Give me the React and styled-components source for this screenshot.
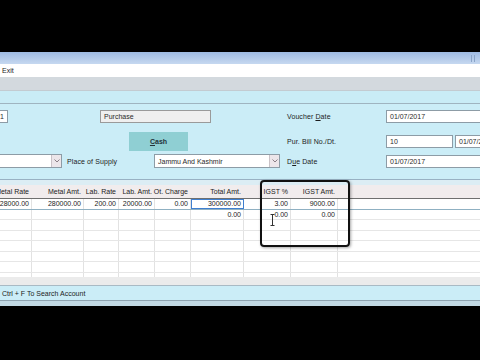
import React from "react";
import styled, { createGlobalStyle } from "styled-components";

const GlobalStyle = createGlobalStyle`
  html, body { margin: 0; padding: 0; background: #000; }
  * { box-sizing: border-box; }
  body { font-family: "Liberation Sans", Arial, sans-serif; }
`;

const Screen = styled.div`
  position: relative;
  width: 480px;
  height: 360px;
  background: #000;
  display: flex;
  flex-direction: column;
  overflow: hidden;
  font-size: 7px;
  color: #1c1c1c;
`;

const Black = styled.div`
  height: ${p => p.h}px;
  flex: none;
  background: #000;
`;

const TitleBar = styled.div`
  height: 12px;
  flex: none;
  background: linear-gradient(#9ebae2, #c6d8f0);
  display: flex;
  justify-content: flex-end;
  align-items: center;
  gap: 2px;
  padding-right: 5px;
`;

const Grip = styled.span`
  width: 1px;
  height: 7px;
  background: #8aa4c8;
`;

const MenuBar = styled.div`
  height: 13px;
  flex: none;
  background: #fff;
  display: flex;
  align-items: center;
  padding-left: 2px;
`;

const ToolBar = styled.div`
  height: 14px;
  flex: none;
  background: #d3d9de;
  border-bottom: 1px solid #c3cbd1;
`;

const Band = styled.div`
  height: 13px;
  flex: none;
  background: #c9ecf6;
  border-bottom: 1px solid #9fb4c0;
`;

const Form = styled.div`
  height: 75px;
  flex: none;
  background: #cbedf7;
  padding-top: 6px;
  overflow: hidden;
`;

const FormInner = styled.div`
  margin-left: -40px;
  display: flex;
  flex-direction: column;
`;

const FormRow = styled.div`
  display: flex;
  align-items: center;
  height: ${p => p.h}px;
  margin-top: ${p => p.mt || 0}px;
`;

const Field = styled.div`
  flex: none;
  width: ${p => p.w}px;
  height: ${p => p.h || 13}px;
  margin-left: ${p => p.ml || 0}px;
  background: ${p => (p.grey ? "#efefef" : "#fff")};
  border: 1px solid ${p => (p.grey ? "#9a9a9a" : "#8d9ca6")};
  display: flex;
  align-items: center;
  justify-content: ${p => (p.right ? "flex-end" : "flex-start")};
  padding: 0 3px;
  color: #2a2a2a;
  white-space: nowrap;
  overflow: hidden;
`;

const Select = styled.div`
  flex: none;
  width: ${p => p.w}px;
  height: 14px;
  margin-left: ${p => p.ml || 0}px;
  background: #fff;
  border: 1px solid #8d9ca6;
  display: flex;
  align-items: center;
  padding-left: 3px;
  color: #2a2a2a;
`;

const SelectText = styled.span`
  flex: 1;
  white-space: nowrap;
`;

const Arrow = styled.div`
  width: 10px;
  height: 12px;
  background: #ece6ea;
  border-left: 1px solid #c9c2c7;
  display: flex;
  align-items: center;
  justify-content: center;
`;

const Label = styled.div`
  flex: none;
  width: ${p => p.w}px;
  margin-left: ${p => p.ml || 0}px;
  white-space: nowrap;
  letter-spacing: 0.1px;
`;

const CashButton = styled.div`
  flex: none;
  width: 59px;
  height: 19px;
  margin-left: ${p => p.ml}px;
  background: #8fcfd3;
  display: flex;
  align-items: center;
  justify-content: center;
  font-weight: bold;
  color: #23323a;
`;

const Grid = styled.div`
  height: 98px;
  flex: none;
  background: #fff;
  border-top: 1px solid #98b1c3;
  display: flex;
  flex-direction: column;
  overflow: hidden;
`;

const Strip = styled.div`
  height: 5px;
  flex: none;
  background: #dcedf4;
`;

const HeaderRow = styled.div`
  height: 14px;
  flex: none;
  display: flex;
  margin-left: -20px;
  background: #f1eced;
  border-bottom: 1px solid #6f6f6f;
`;

const Body = styled.div`
  flex: 1;
  overflow: hidden;
  margin-left: -20px;
`;

const Row = styled.div`
  height: 10.5px;
  display: flex;
  border-bottom: 1px solid ${p => (p.active ? "#8fb0c2" : "#e6e6e6")};
`;

const Cell = styled.div`
  flex: none;
  width: ${p => p.w}px;
  height: 100%;
  display: flex;
  align-items: center;
  justify-content: flex-end;
  padding-right: 2px;
  white-space: nowrap;
  border-right: 1px solid ${p => (p.head ? "transparent" : "#e2e2e2")};
  outline: ${p => (p.sel ? "1px solid #3f7fcf" : "none")};
  outline-offset: -1px;
`;

const Filler = styled.div`
  flex: 1;
`;

const GapBar = styled.div`
  height: 8px;
  flex: none;
  background: #ebebeb;
`;

const Status = styled.div`
  height: 16px;
  flex: none;
  background: #cbedf7;
  border-top: 1px solid #a9bac4;
  border-bottom: 1px solid #8ea3b0;
  display: flex;
  align-items: center;
  padding-left: 2px;
`;

const BottomBar = styled.div`
  height: 5px;
  flex: none;
  background: #c2d9e4;
`;

const Highlight = styled.div`
  position: absolute;
  left: 260px;
  top: 180px;
  width: 90px;
  height: 67px;
  border: 2px solid #111;
  border-radius: 4px;
  box-shadow: 1px 1px 3px rgba(0, 0, 0, 0.35);
`;

const Cursor = styled.svg`
  position: absolute;
  left: 270px;
  top: 214px;
`;

const widths = [52, 52, 35, 36, 36, 53, 47, 47];
const headers = ["Metal Rate", "Metal Amt.", "Lab. Rate", "Lab. Amt.", "Ot. Charge", "Total Amt.", "IGST %", "IGST Amt."];
const rows = [
  ["28000.00", "280000.00", "200.00", "20000.00", "0.00", "300000.00", "3.00", "9000.00"],
  ["", "", "", "", "", "0.00", "0.00", "0.00"],
  [], [], [], [], [], [],
];

const Chevron = () => (
  <svg width="6" height="4" viewBox="0 0 6 4">
    <path d="M0.5 0.5 L3 3 L5.5 0.5" fill="none" stroke="#8a7f86" strokeWidth="1" />
  </svg>
);

export default function App() {
  return (
    <>
      <GlobalStyle />
      <Screen>
        <Black h={52} />
        <TitleBar>
          <Grip />
          <Grip />
        </TitleBar>
        <MenuBar>Exit</MenuBar>
        <ToolBar />
        <Band />
        <Form>
          <FormInner>
            <FormRow h={13}>
              <Field w={48} right>1</Field>
              <Field w={111} ml={92} grey>Purchase</Field>
              <Label w={99} ml={76}>Voucher <u>D</u>ate</Label>
              <Field w={100}>01/07/2017</Field>
            </FormRow>
            <FormRow h={19} mt={9}>
              <CashButton ml={169}><span><u>C</u>ash</span></CashButton>
              <Label w={99} ml={99}>Pur. Bill No./Dt.</Label>
              <Field w={67}>10</Field>
              <Field w={40} ml={2}>01/07/2017</Field>
            </FormRow>
            <FormRow h={14} mt={3}>
              <Select w={102}><SelectText /><Arrow><Chevron /></Arrow></Select>
              <Label w={87} ml={5}>Place of Supply</Label>
              <Select w={126}><SelectText>Jammu And Kashmir</SelectText><Arrow><Chevron /></Arrow></Select>
              <Label w={99} ml={7}>D<u>u</u>e Date</Label>
              <Field w={100}>01/07/2017</Field>
            </FormRow>
          </FormInner>
        </Form>
        <Grid>
          <Strip />
          <HeaderRow>
            {headers.map((h, i) => (
              <Cell key={h} w={widths[i]} head>{h}</Cell>
            ))}
            <Filler />
          </HeaderRow>
          <Body>
            {rows.map((r, ri) => (
              <Row key={ri} active={ri === 0}>
                {widths.map((w, ci) => (
                  <Cell key={ci} w={w} sel={ri === 0 && ci === 5}>{r[ci] || ""}</Cell>
                ))}
                <Filler />
              </Row>
            ))}
          </Body>
        </Grid>
        <GapBar />
        <Status>Ctrl + F To Search Account</Status>
        <BottomBar />
        <Black h={60} />
        <Highlight />
        <Cursor width="5" height="12" viewBox="0 0 5 12">
          <path d="M0.5 0.5 H4.5 M2.5 0.5 V11.5 M0.5 11.5 H4.5" fill="none" stroke="#333" strokeWidth="1" />
        </Cursor>
      </Screen>
    </>
  );
}
